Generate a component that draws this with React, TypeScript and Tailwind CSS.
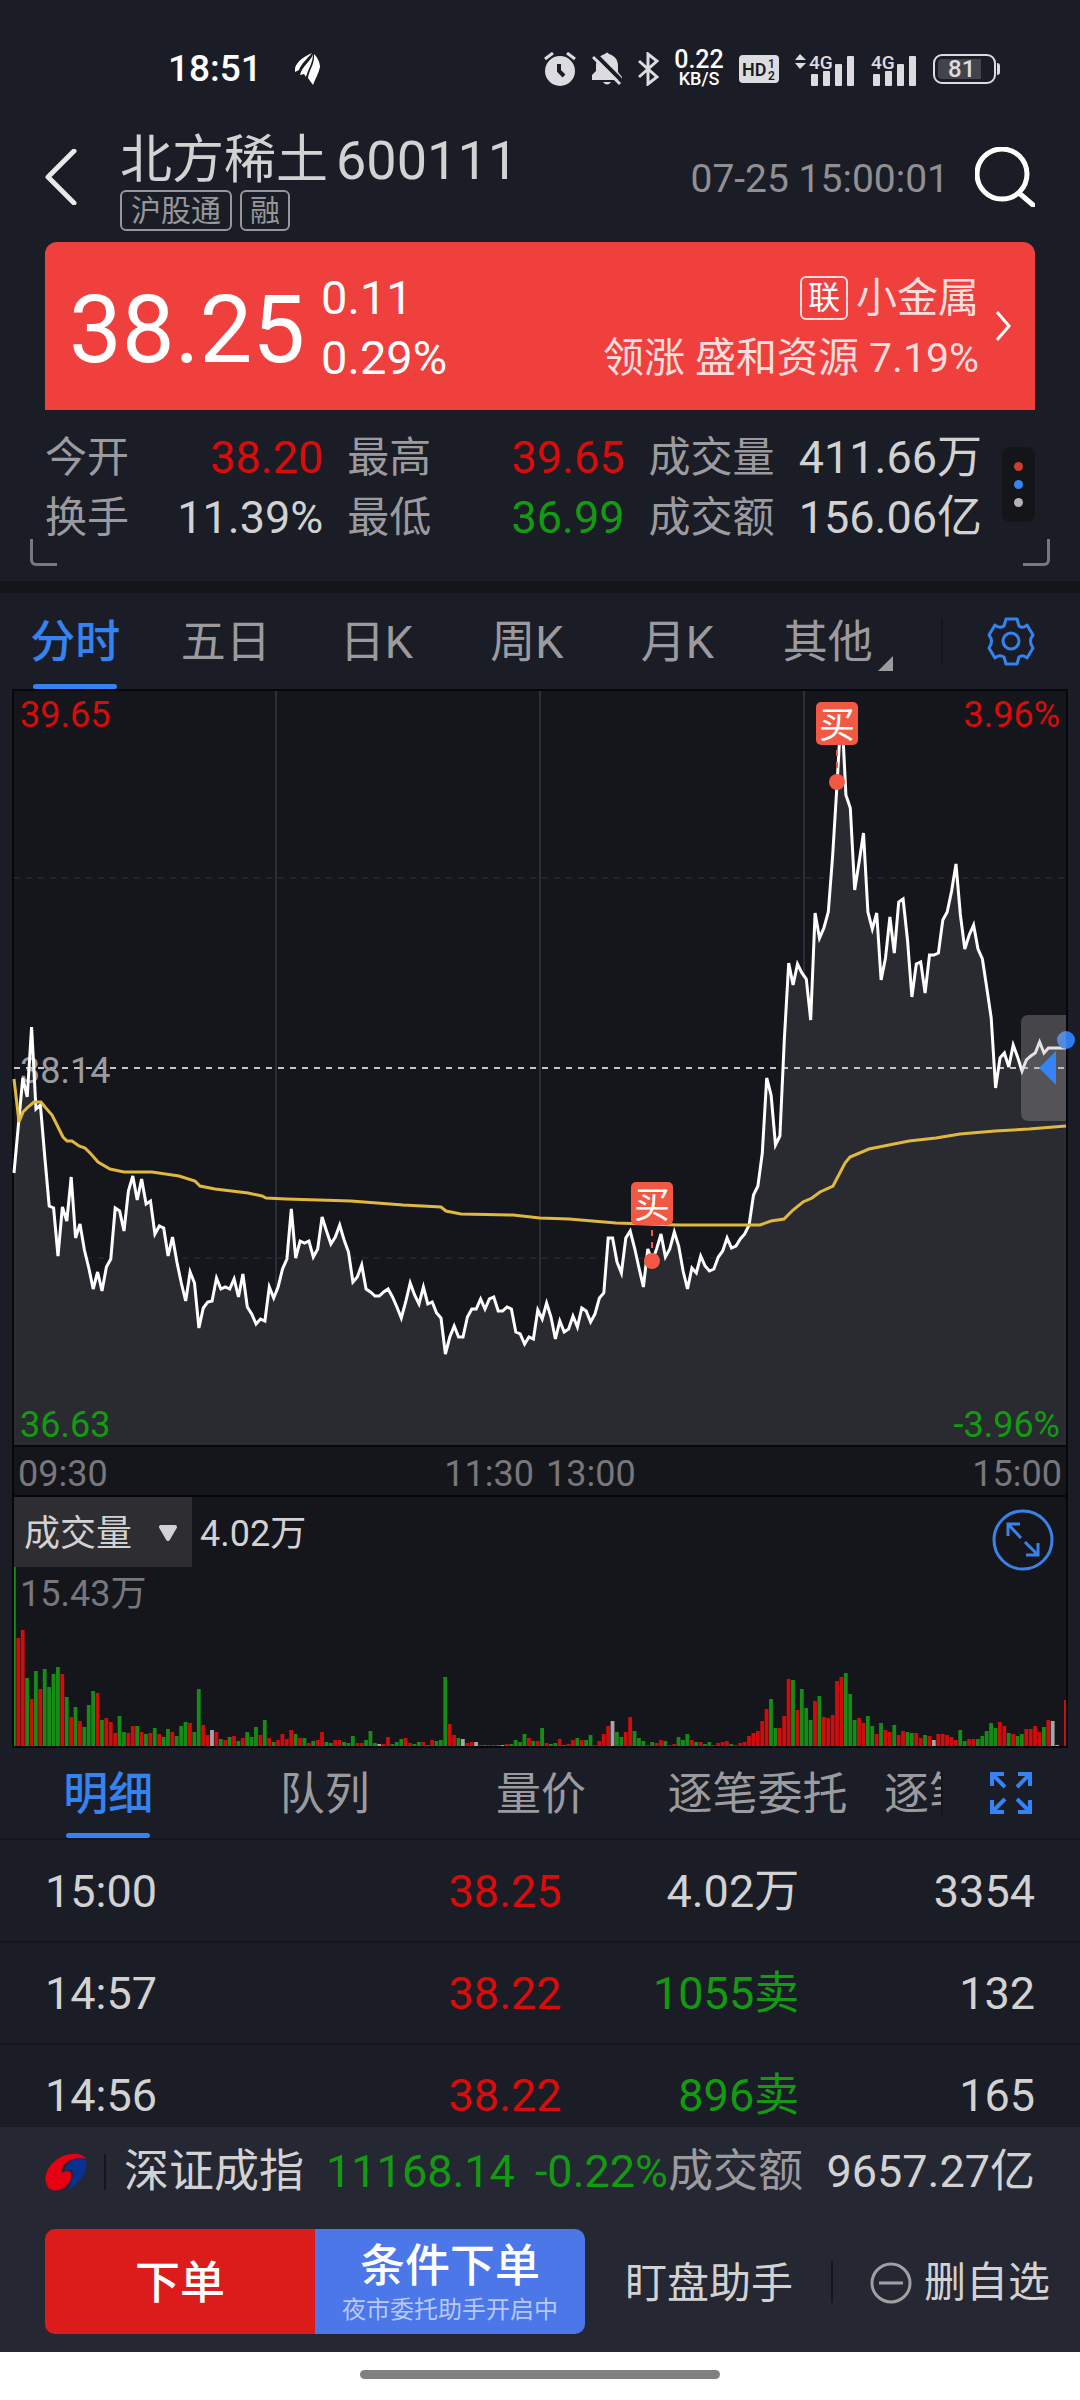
import { useState } from "react";
import { clsx } from "clsx";

const periodTabs = ["分时", "五日", "日K", "周K", "月K", "其他"];
const detailTabs = ["明细", "队列", "量价", "逐笔委托", "逐笔成交"];

const stats = [
  [
    { label: "今开", value: "38.20", color: "text-[#d90b0b]" },
    { label: "换手", value: "11.39%", color: "text-[#d2d2d2]" },
  ],
  [
    { label: "最高", value: "39.65", color: "text-[#d90b0b]" },
    { label: "最低", value: "36.99", color: "text-[#129a12]" },
  ],
  [
    { label: "成交量", value: "411.66万", color: "text-[#d2d2d2]" },
    { label: "成交额", value: "156.06亿", color: "text-[#d2d2d2]" },
  ],
];

const trades = [
  { time: "15:00", price: "38.25", volume: "4.02万", count: "3354", sell: false },
  { time: "14:57", price: "38.22", volume: "1055卖", count: "132", sell: true },
  { time: "14:56", price: "38.22", volume: "896卖", count: "165", sell: true },
];

// one value per minute, 09:30 - 15:00
const priceSeries = [
  1173, 1125, 1078, 1097, 1027, 1109, 1105, 1157, 1206, 1208, 1256, 1207, 1221, 1177, 1238, 1224, 1250, 1268, 1289, 1272,
  1291, 1267, 1259, 1208, 1211, 1231, 1191, 1176, 1200, 1179, 1204, 1201, 1234, 1226, 1228, 1256, 1237, 1262, 1283, 1301,
  1272, 1283, 1328, 1308, 1302, 1301, 1278, 1289, 1287, 1289, 1279, 1297, 1274, 1307, 1314, 1324, 1319, 1321, 1287, 1298,
  1287, 1269, 1259, 1209, 1258, 1241, 1243, 1241, 1257, 1249, 1217, 1231, 1244, 1237, 1225, 1240, 1252, 1282, 1277, 1265,
  1289, 1292, 1296, 1296, 1292, 1289, 1297, 1307, 1318, 1302, 1283, 1295, 1304, 1287, 1304, 1302, 1313, 1318, 1354, 1337,
  1326, 1337, 1337, 1317, 1309, 1309, 1299, 1309, 1299, 1297, 1311, 1311, 1307, 1309, 1332, 1334, 1344, 1337, 1339, 1310,
  1319, 1303, 1317, 1339, 1321, 1332, 1329, 1316, 1327, 1308, 1311, 1322, 1314, 1298, 1293, 1238, 1238, 1262, 1273, 1238,
  1231, 1248, 1268, 1287, 1249, 1261, 1249, 1234, 1257, 1249, 1232, 1246, 1271, 1289, 1268, 1273, 1256, 1266, 1271, 1269,
  1257, 1251, 1238, 1248, 1246, 1239, 1234, 1225, 1195, 1186, 1153, 1078, 1095, 1145, 1136, 1040, 963, 985, 964, 973,
  979, 1020, 913, 938, 928, 912, 855, 783, 706, 795, 808, 890, 862, 833, 912, 929, 913, 980, 958, 917,
  953, 902, 899, 940, 997, 964, 962, 993, 955, 955, 953, 920, 912, 891, 864, 915, 949, 935, 925, 949,
  959, 988, 1018, 1088, 1058, 1053, 1067, 1045, 1057, 1071, 1060, 1056, 1053, 1042, 1053, 1048, 1048, 1048, 1048, 1048,
];

const averageLine =
  "0,388 5,431 9,421 14,416 20,411 27,411 31,416 38,424 43,434 49,446 53,450 58,450 65,455 71,457 77,463 84,471 96,478 110,481 138,481 165,485 181,490 186,495 201,498 234,502 248,505 252,507 272,508 337,510 389,514 427,516 432,520 447,523 499,524 526,527 555,528 602,532 664,534 715,534 746,534 757,530 770,528 779,519 789,511 798,507 806,501 819,495 831,472 836,466 855,458 895,450 922,447 946,443 981,440 1015,438 1052,435";

// r = up, g = down, w = flat
const volumeSeries =
  "g179 r108 r116 g68 r47 g75 r57 g77 g59 g72 g79 r72 g49 r29 g39 r25 g19 g41 g55 r53 g26 r28 r24 r13 g30 g14 r13 r20 g20 r14 " +
  "g12 r13 g18 r12 g9 g17 r14 g10 g20 g24 r23 g14 g57 r21 r11 w16 r14 g7 r6 g9 r10 g5 r8 g14 g9 g19 r11 g26 r8 g4 " +
  "r6 r12 r7 r16 g12 r8 g8 r3 g5 r6 r14 g4 g3 r6 r6 g4 g3 g10 r3 r3 g6 g15 g3 w2 r2 r9 g2 g4 g7 r8 " +
  "r3 g2 g4 r4 g1 r6 g5 g6 g69 r22 r11 g8 w7 r3 r4 w4 r1 g1 r1 r1 g1 w1 r2 g2 g6 g4 g12 r8 g5 r5 " +
  "g18 r3 g2 g3 r7 g1 r2 r6 g8 r6 g6 g11 r1 r5 r12 r20 w25 g14 g9 r14 r29 g15 g8 g5 r1 g4 r3 r6 g5 r1 " +
  "r2 g9 g6 g12 r6 g4 r4 g2 g4 r1 r3 r4 r5 g2 r1 r3 r4 r10 r13 r15 r25 r37 g47 g18 r18 r30 r67 g66 r36 g57 " +
  "g38 g26 r45 g50 r29 r28 r31 r65 r69 g73 g52 g26 r28 r23 g30 g20 r12 g23 r16 r14 g21 r11 r15 g14 g13 r13 r8 g11 r10 w6 " +
  "r12 r12 r11 r9 r6 g16 g5 r7 r7 g7 g10 g15 g23 g18 r24 r20 g13 r12 g10 g12 r17 r17 r20 r14 g19 r26 w25 w1 w0 r46";

const barColors: Record<string, string> = { r: "#d00c0c", g: "#168c16", w: "#a5a5a8" };

const STEP = 1052 / 239;

const SignalBars = ({ roaming = false }: { roaming?: boolean }) => {
  const x = roaming ? 14 : 0;
  const width = roaming ? 60 : 46;
  return (
    <svg width={width} height="44" viewBox={`0 -5 ${width} 44`} fill="#dcdce0">
      {roaming && <path d="M0 8 L5 2 L11 8 Z M0 11 L11 11 L5 17 Z" />}
      <text x={x} y="17" fontSize="19" fontWeight="500" fontFamily="Roboto, sans-serif">
        4G
      </text>
      <rect x={x + 2} y="22" width="7" height="12" rx="1" />
      <rect x={x + 14} y="19" width="7" height="15" rx="1" />
      <rect x={x + 26} y="12" width="7" height="22" rx="1" />
      <rect x={x + 38} y="4" width="7" height="30" rx="1" />
    </svg>
  );
};

const StatusBar = () => (
  <div className="flex h-[120px] shrink-0 items-center justify-between pl-[168px] pr-20 pt-[18px]">
    <div className="flex items-center gap-8">
      <span className="text-[37px] font-medium leading-10 text-white">18:51</span>
      <svg width="28" height="32" viewBox="0 0 28 32" fill="#fff">
        <path d="M18 0 C11 3 3 8 1 15 L1 19 L5 17 C7 11 13 6 18 0 Z" />
        <path d="M19 1 C18 7 8 13 6 22 L10 21 L12 24 C14 16 19 10 19 1 Z" />
        <path d="M20 1 C21 11 15 17 14 25 L19 32 C21 26 25 20 26 14 C26 9 23 4 20 1 Z" />
      </svg>
    </div>
    <div className="flex items-center gap-4">
      <svg width="32" height="34" viewBox="0 0 32 34">
        <circle cx="16" cy="19" r="15" fill="#dcdce0" />
        <path d="M1 7 L9 1 M23 1 L31 7" stroke="#dcdce0" strokeWidth="3" />
        <path d="M15 12 V19 L20 24" fill="none" stroke="#1b1d26" strokeWidth="4" />
      </svg>
      <svg width="30" height="34" viewBox="0 0 30 34">
        <path
          d="M13 2 Q15 -1 17 2 C23 4 26 8 26 14 V20 L30 25 V28 H0 V23 L4 19 V13 C4 8 7 4 13 2 Z M11 30 H19 Q15 35 11 30 Z"
          fill="#dcdce0"
        />
        <path d="M4 3 L31 30" stroke="#1b1d26" strokeWidth="4" />
        <path d="M1 5 L28 32" stroke="#dcdce0" strokeWidth="3" />
      </svg>
      <svg width="21" height="34" viewBox="0 0 21 34" fill="none" stroke="#dcdce0" strokeWidth="3">
        <path d="M1 9 L19 25 L10 32 V2 L19 9 L1 25" />
      </svg>
      <div className="flex w-12 flex-col items-center font-medium text-white">
        <span className="text-[25px] leading-5">0.22</span>
        <span className="text-[18px] leading-[18px]">KB/S</span>
      </div>
      <svg width="40" height="28" fill="#1b1d26" fontFamily="Roboto, sans-serif" fontWeight="600">
        <rect width="40" height="28" rx="4" fill="#dcdce0" />
        <text x="3" y="21" fontSize="18">
          HD
        </text>
        <text x="29" y="13" fontSize="12">
          1
        </text>
        <text x="29" y="25" fontSize="12">
          2
        </text>
      </svg>
      <SignalBars roaming />
      <SignalBars />
      <div className="flex items-center gap-px">
        <div className="flex h-[30px] w-[63px] rounded-[9px] border-2 border-[#dcdce0] p-[3px]">
          <span className="w-[43px] rounded-l bg-[#43444b] pl-2.5 text-[24px] font-medium leading-5 text-[#dcdce0]">
            81
          </span>
        </div>
        <span className="h-3 w-[3px] rounded-r bg-[#dcdce0]" />
      </div>
    </div>
  </div>
);

const Header = () => (
  <header className="flex h-[122px] shrink-0 items-start px-[45px] pt-3">
    <button type="button" aria-label="返回" className="flex h-[90px] w-[75px] items-center">
      <svg width="32" height="56" viewBox="0 0 32 56" fill="none" stroke="#e8e8e8" strokeWidth="5">
        <path d="M29 2 L3 28 L29 54" strokeLinecap="round" strokeLinejoin="round" />
      </svg>
    </button>
    <div className="flex-1">
      <h1 className="flex gap-2 text-[52px] leading-[58px] text-[#d2d2d2]">
        <span>北方稀土</span>
        <span className="text-[54px]">600111</span>
      </h1>
      <div className="flex gap-2 text-[30px] leading-[37px] text-[#96969b]">
        <span className="rounded-md border-2 border-[#96969b] px-[9px]">沪股通</span>
        <span className="rounded-md border-2 border-[#96969b] px-2">融</span>
      </div>
    </div>
    <div className="flex h-[90px] items-center gap-[26px]">
      <time className="pt-1 text-[39px] leading-10 text-[#8f8f94]">07-25 15:00:01</time>
      <button type="button" aria-label="搜索">
        <svg width="60" height="60" viewBox="0 0 60 60" fill="none" stroke="#fff" strokeWidth="5">
          <circle cx="27" cy="27" r="25" />
          <path d="M44 46 L58 58" strokeLinecap="round" />
        </svg>
      </button>
    </div>
  </header>
);

const QuoteCard = () => (
  <section className="mx-[45px] flex h-[168px] shrink-0 items-center rounded-t-[12px] bg-[#ef403e] pl-6 pr-6 text-white">
    <strong className="pt-2 text-[94px] font-normal leading-[100px]">38.25</strong>
    <div className="ml-4 flex flex-col pt-1 text-[47px] leading-[60px]">
      <span>0.11</span>
      <span>0.29%</span>
    </div>
    <a href="#sector" className="ml-auto flex items-center gap-4">
      <div className="flex flex-col items-end pt-1 text-[41px] leading-[60px] text-[#fcdcdc]">
        <span className="flex items-center gap-2">
          <span className="rounded-md border-2 border-[#fcdcdc] px-1.5 text-[32px] leading-10 text-white">联</span>
          小金属
        </span>
        <span className="flex gap-2.5">
          <span>领涨</span>
          <span>盛和资源</span>
          <span>7.19%</span>
        </span>
      </div>
      <svg width="16" height="32" viewBox="0 0 16 32" fill="none" stroke="#fff" strokeWidth="3">
        <path d="M2 2 L14 16 L2 30" />
      </svg>
    </a>
  </section>
);

const StatsPanel = () => (
  <section className="relative flex h-[171px] shrink-0 items-start gap-5 px-[45px] pt-[18px]">
    <div className="grid flex-1 grid-cols-[277fr_276fr_332fr] gap-x-6">
      {stats.map((column) => (
        <dl key={column[0].label}>
          {column.map((item) => (
            <div key={item.label} className="flex items-center justify-between leading-[60px]">
              <dt className="text-[42px] text-[#9b9b9f]">{item.label}</dt>
              <dd className={clsx("text-[45px]", item.color)}>{item.value}</dd>
            </div>
          ))}
        </dl>
      ))}
    </div>
    <button
      type="button"
      aria-label="更多指标"
      className="mt-[19px] flex h-[75px] w-[33px] flex-col items-center justify-center gap-[9px] rounded-lg bg-[#141519]"
    >
      <span className="h-[9px] w-[9px] rounded-full bg-[#c9402f]" />
      <span className="h-[9px] w-[9px] rounded-full bg-[#3583f5]" />
      <span className="h-[9px] w-[9px] rounded-full bg-[#b4b4b8]" />
    </button>
    <span className="absolute bottom-[15px] left-[30px] h-[27px] w-[27px] rounded-bl-md border-b-[3px] border-l-[3px] border-[#77777c]" />
    <span className="absolute bottom-[15px] right-[30px] h-[27px] w-[27px] rounded-br-md border-b-[3px] border-r-[3px] border-[#77777c]" />
  </section>
);

const BuyMarker = ({ x, top, dot }: { x: number; top: number; dot: number }) => (
  <g>
    <path d={`M${x} ${top + 48} V${dot}`} stroke="#f25843" strokeWidth="2" strokeDasharray="6 6" />
    <circle cx={x} cy={dot} r="8" fill="#f25843" />
    <rect x={x - 21} y={top} width="42" height="43" rx="5" fill="#f25843" />
    <text
      x={x}
      y={top + 36}
      fontSize="36"
      textAnchor="middle"
      fill="#fff"
      fontFamily="Roboto, 'Noto Sans CJK SC', sans-serif"
    >
      买
    </text>
  </g>
);

const PriceChart = () => {
  const points = priceSeries.map((y, i) => `${(i * STEP).toFixed(1)},${y - 691}`).join(" ");
  return (
    <div className="relative border-2 border-[#06070b] bg-[#15161b] text-[36px] leading-10">
      <svg viewBox="0 0 1052 754" className="block w-full overflow-visible" fill="none">
        <path d="M262 0 V754 M526 0 V754 M790 0 V754" stroke="#2c2d37" strokeWidth="2" />
        <path d="M0 187 H1052 M0 567 H1052" stroke="#222328" strokeWidth="2" strokeDasharray="6 6" />
        <polygon points={`0,754 ${points} 1052,754`} fill="#2a2b30" />
        <path d="M0 377 H1052" stroke="#c4c6ca" strokeWidth="2" strokeDasharray="6 6" />
        <text x="6" y="392" fontSize="36" fill="#9b9b9f" fontFamily="Roboto, sans-serif">
          38.14
        </text>
        <polyline points={points} stroke="#fff" strokeWidth="3" />
        <polyline points={averageLine} stroke="#e0b73f" strokeWidth="3" />
        <BuyMarker x={823} top={11} dot={91} />
        <BuyMarker x={638} top={491} dot={570} />
        <circle cx="1052" cy="349" r="9" fill="#2f7bf0" />
        <path d="M1052 324 H1015 Q1007 324 1007 332 V422 Q1007 430 1015 430 H1052 Z" fill="#aaaaaa" fillOpacity="0.33" />
        <path d="M1025 377 L1042 360 V394 Z" fill="#3583f5" />
      </svg>
      <span className="absolute left-1.5 top-1 text-[#d90b0b]">39.65</span>
      <span className="absolute right-1.5 top-1 text-[#d90b0b]">3.96%</span>
      <span className="absolute bottom-0 left-1.5 text-[#129a12]">36.63</span>
      <span className="absolute bottom-0 right-1.5 text-[#129a12]">-3.96%</span>
    </div>
  );
};

const VolumeChart = () => (
  <div className="relative border-2 border-t-0 border-[#06070b] bg-[#15161b] text-[36px]">
    <div className="flex h-[70px] items-center">
      <div className="relative">
        <select
          aria-label="副图指标"
          className="block h-[70px] w-[178px] appearance-none bg-[#2d2d32] pl-2.5 pt-1 text-[#d2d2d2] outline-none"
        >
          <option>成交量</option>
        </select>
        <svg className="pointer-events-none absolute right-[14px] top-7" width="20" height="17" viewBox="0 0 20 17">
          <path d="M3 2 H17 L10 14 Z" fill="#d2d2d2" stroke="#d2d2d2" strokeWidth="4" strokeLinejoin="round" />
        </svg>
      </div>
      <span className="ml-2 pt-1 text-[#d2d2d2]">4.02万</span>
      <button type="button" aria-label="放大" className="ml-auto mr-3 mt-4">
        <svg width="62" height="62" viewBox="0 0 62 62" fill="none" stroke="#3b82e6" strokeWidth="3">
          <circle cx="31" cy="31" r="29" />
          <path d="M28 15 H16 V27 M16 15 L29 29 M33 33 L46 46 M46 34 V46 H34" />
        </svg>
      </button>
    </div>
    <span className="absolute left-1.5 top-[77px] leading-10 text-[#77777c]">15.43万</span>
    <svg viewBox="0 0 1052 179" className="block w-full">
      {volumeSeries.split(" ").map((bar, i) => {
        const h = Number(bar.slice(1));
        return <rect key={i} x={i * STEP - 2} y={179 - h} width="3.8" height={h} fill={barColors[bar[0]]} />;
      })}
    </svg>
  </div>
);

const ChartSection = () => {
  const [active, setActive] = useState("分时");

  return (
    <section className="shrink-0 border-t-[12px] border-[#141519]">
      <div className="flex h-24 items-center pr-[45px]">
        <nav className="flex h-full flex-1">
          {periodTabs.map((tab) => (
            <button
              key={tab}
              type="button"
              onClick={() => setActive(tab)}
              className={clsx(
                "relative flex-1 pt-1 text-[45px]",
                active === tab ? "font-medium text-[#3583f0]" : "text-[#9b9b9f]",
              )}
            >
              {tab}
              {active === tab && (
                <span className="absolute bottom-0 left-1/2 h-[5px] w-[84px] -translate-x-1/2 rounded-sm bg-[#3583f0]" />
              )}
              {tab === "其他" && (
                <svg className="absolute bottom-[18px] right-2.5" width="15" height="15" fill="#9b9b9f">
                  <path d="M15 0 V15 H0 Z" />
                </svg>
              )}
            </button>
          ))}
        </nav>
        <span className="ml-[38px] h-11 w-0.5 bg-[#141519]" />
        <button type="button" aria-label="设置" className="ml-11">
          <svg width="48" height="49" viewBox="0 0 48 49" fill="none" stroke="#3583f0" strokeWidth="3" strokeLinejoin="round">
            <path d="M19 2 H30 L32 9 Q36 12 40 8 L46 18 Q41 24 46 31 L40 41 Q36 37 32 40 L30 47 H19 L17 40 Q12 37 8 41 L2 31 Q7 24 2 18 L8 8 Q12 12 17 9 Z" />
            <circle cx="24" cy="24" r="8" />
          </svg>
        </button>
      </div>
      <div className="px-3">
        <PriceChart />
        <div className="grid h-[50px] grid-cols-2 border-x-2 border-b-2 border-[#06070b] bg-[#15161b] px-1 pt-1 text-[36px] leading-[46px] text-[#77777c]">
          <div className="flex justify-between pr-1.5">
            <span>09:30</span>
            <span>11:30</span>
          </div>
          <div className="flex justify-between pl-1.5">
            <span>13:00</span>
            <span>15:00</span>
          </div>
        </div>
        <VolumeChart />
      </div>
    </section>
  );
};

const TradeDetails = () => {
  const [active, setActive] = useState("明细");

  return (
    <section className="min-h-0 flex-1 overflow-hidden">
      <div className="flex h-[92px] items-center border-b-2 border-[#15161b] pr-[45px]">
        <nav className="flex h-full min-w-0 flex-1 overflow-hidden">
          {detailTabs.map((tab) => (
            <button
              key={tab}
              type="button"
              onClick={() => setActive(tab)}
              className={clsx(
                "relative w-[23%] shrink-0 whitespace-nowrap pt-1 text-[45px]",
                active === tab ? "font-medium text-[#3583f0]" : "text-[#9b9b9f]",
              )}
            >
              {tab}
              {active === tab && (
                <span className="absolute bottom-0 left-1/2 h-[5px] w-[84px] -translate-x-1/2 rounded-sm bg-[#3583f0]" />
              )}
            </button>
          ))}
        </nav>
        <span className="h-11 w-0.5 bg-[#141519]" />
        <button type="button" aria-label="全屏" className="ml-[46px] mr-0.5">
          <svg width="44" height="44" viewBox="0 0 44 44" fill="none" stroke="#3583f5" strokeWidth="4">
            <path d="M15 3 H3 V15 M3 3 L16 16 M29 3 H41 V15 M41 3 L28 16 M15 41 H3 V29 M3 41 L16 28 M29 41 H41 V29 M41 41 L28 28" />
          </svg>
        </button>
      </div>
      <table className="w-full table-fixed text-[45px] text-[#d2d2d2]">
        <tbody>
          {trades.map((trade) => (
            <tr key={trade.time} className="h-[102px] border-b-2 border-[#15161b]">
              <td className="w-[26%] pl-[45px] pt-0.5">{trade.time}</td>
              <td className="w-[26%] pt-0.5 text-right text-[#d90b0b]">{trade.price}</td>
              <td className={clsx("w-[22%] pt-0.5 text-right", trade.sell && "text-[#129a12]")}>{trade.volume}</td>
              <td className="w-[26%] pr-[45px] pt-0.5 text-right">{trade.count}</td>
            </tr>
          ))}
        </tbody>
      </table>
    </section>
  );
};

const BottomPanel = () => (
  <footer className="shrink-0 bg-[#252732]">
    <div className="flex h-[102px] items-center whitespace-nowrap px-[45px] pb-3 text-[45px] text-[#d2d2d2]">
      <svg width="42" height="40" viewBox="0 0 42 40">
        <path d="M41 7 C37 0 22 0 11 8 C2 15 -2 26 2 33 C5 40 14 40 20 35 C26 30 28 22 25 20 C23 18 20 19 17 21 C16 12 26 4 41 7 Z" fill="#e60012" />
        <path d="M41 8 C34 4 22 8 19 19 C25 15 30 18 28 24 C27 31 24 35 22 39 C33 33 44 20 41 8 Z" fill="#0b3190" />
      </svg>
      <span className="ml-[17px] h-9 w-0.5 bg-[#15161b]" />
      <span className="ml-[18px]">深证成指</span>
      <span className="ml-[22px] text-[#129a12]">11168.14</span>
      <span className="ml-5 text-[#129a12]">-0.22%</span>
      <span className="text-[#9b9b9f]">成交额</span>
      <span className="ml-auto">9657.27亿</span>
    </div>
    <div className="flex h-[105px] items-stretch pl-[45px] pr-[30px]">
      <div className="flex w-[50vw] shrink-0 overflow-hidden rounded-[10px] text-[45px] font-medium text-white">
        <button type="button" className="flex-1 bg-[#dc1b1b] pt-1">
          下单
        </button>
        <button type="button" className="flex flex-1 flex-col items-center justify-center bg-[#4b77e8] pt-1.5">
          <span className="leading-[50px]">条件下单</span>
          <span className="text-[24px] font-normal leading-9 text-[#b7c8f6]">夜市委托助手开启中</span>
        </button>
      </div>
      <div className="flex flex-1 items-center justify-between whitespace-nowrap pl-10 text-[42px] text-[#d2d2d2]">
        <button type="button" className="pt-1">
          盯盘助手
        </button>
        <span className="h-[42px] w-0.5 bg-[#15161b]" />
        <button type="button" className="flex items-center gap-3 pt-0.5">
          <svg width="42" height="42" viewBox="0 0 42 42" fill="none" stroke="#a0a0a4" strokeWidth="3">
            <circle cx="21" cy="21" r="19" />
            <path d="M9 21 H33" />
          </svg>
          删自选
        </button>
      </div>
    </div>
    <div className="mt-[18px] flex h-12 justify-center bg-white pt-[18px]">
      <span className="h-[9px] w-1/3 rounded-full bg-[#808080]" />
    </div>
  </footer>
);

const App = () => (
  <div className="flex h-screen flex-col overflow-hidden bg-[#1b1d26] font-['Roboto','Noto_Sans_CJK_SC',sans-serif]">
    <StatusBar />
    <Header />
    <QuoteCard />
    <StatsPanel />
    <ChartSection />
    <TradeDetails />
    <BottomPanel />
  </div>
);

export default App;
